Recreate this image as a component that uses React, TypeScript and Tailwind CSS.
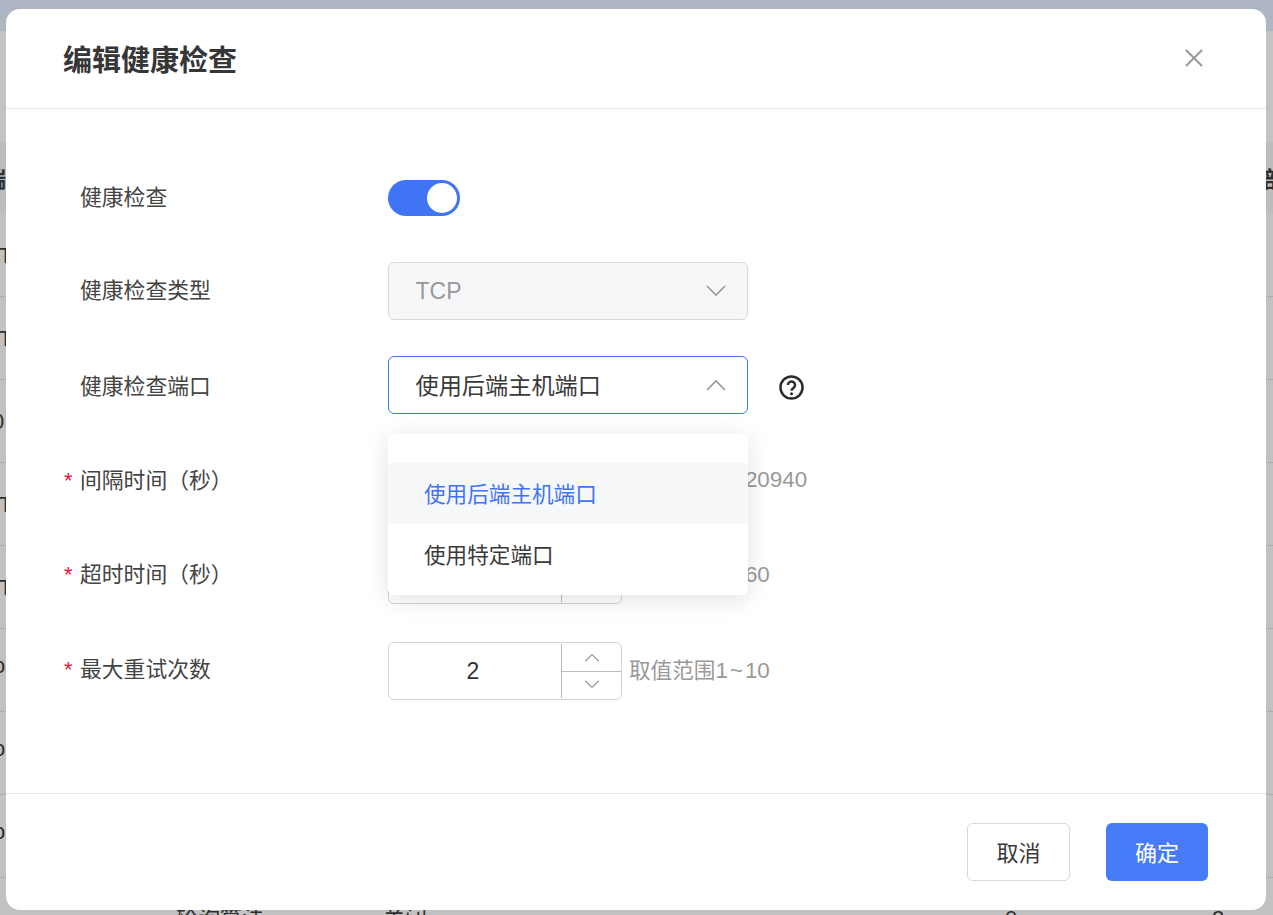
import { X } from 'lucide-react'

const font = { fontFamily: '"Liberation Sans", "Noto Sans CJK SC", sans-serif' }

const backRows = [
  { text: 'T', cls: 'ml-[-1px]' },
  { text: 'T', cls: 'ml-[-1px]' },
  { text: '0', cls: 'ml-[-8px]' },
  { text: 'T', cls: 'ml-[-1px]' },
  { text: 'T', cls: 'ml-[-1px]' },
  { text: 'o', cls: 'ml-[-7px] mb-[10px]' },
  { text: 'o', cls: 'ml-[-7px] mb-[10px]' },
  { text: 'o', cls: 'ml-[-7px] mb-[10px]' },
]

function Chevron({ up, className }: { up?: boolean; className: string }) {
  return (
    <svg viewBox="0 0 20 12" fill="none" className={className}>
      <path d={up ? 'M1 11 L10 2 L19 11' : 'M1 1 L10 10 L19 1'} stroke="#999999" strokeWidth="1.6" />
    </svg>
  )
}

function Label({ text, required, className = '' }: { text: string; required?: boolean; className?: string }) {
  return (
    <div className={`w-[324px] flex items-center text-[21.8px] text-[#444444] shrink-0 ${className}`}>
      <span className="w-[16px] text-[#e8173f] text-[22px] leading-none">{required ? '*' : ''}</span>
      <span>{text}</span>
    </div>
  )
}

function NumberInput({ value, max }: { value: string; max: string }) {
  return (
    <>
      <div className="w-[234px] h-[58px] border border-[#d4d4d4] rounded-[6px] flex items-stretch">
        <div className="w-[172px] flex items-center justify-center pr-[4px] text-[23px] text-[#333333]">{value}</div>
        <div className="flex-1 my-[1px] border-l border-[#bbbbbb] flex flex-col">
          <div className="flex-1 flex items-center justify-center border-b border-[#bbbbbb]">
            <Chevron up className="w-[16px] h-[9px]" />
          </div>
          <div className="flex-1 flex items-center justify-center">
            <Chevron className="w-[16px] h-[9px]" />
          </div>
        </div>
      </div>
      <span className="ml-[7px] text-[21.6px] text-[#999999]">
        取值范围<span className="text-[22.4px]">1<span className="px-[2px]">~</span>{max}</span>
      </span>
    </>
  )
}

export default function App() {
  return (
    <div className="relative h-[915px] overflow-hidden bg-[#c1c1c1] text-[#2f2f2f]" style={font}>
      {/* page behind the mask */}
      <div className="h-[31px] bg-[#aeb6c4]" />
      <div className="h-[111px] bg-[#c3c3c3]" />
      <div className="h-[72px] pt-[3px] bg-[#bcbcbc] flex items-center justify-between text-[22px] font-bold">
        <span className="ml-[-16px]">端</span>
        <span className="mr-[-12px]">部</span>
      </div>
      {backRows.map((row, i) => (
        <div key={i} className="h-[83px] border-b border-[#acacac] flex items-center text-[22px]">
          <span className={row.cls}>{row.text}</span>
        </div>
      ))}
      <div className="h-[83px] pb-[2px] flex items-center text-[22px]">
        <span className="ml-[176px] w-[207px]">轮询算法</span>
        <span className="w-[622px]">关闭</span>
        <span className="w-[207px]">0</span>
        <span>2</span>
      </div>

      {/* dialog */}
      <div className="absolute left-[6px] top-[9px] w-[1260px] h-[901px] bg-white rounded-[14px] flex flex-col">
        <div className="h-[100px] shrink-0 border-b border-[#e4e4ec] flex items-center justify-between pl-[58px] pr-[57px]">
          <h2 className="ml-[-1px] text-[29px] font-bold text-[#363636] pt-[7px]">编辑健康检查</h2>
          <X className="w-[30px] h-[30px] text-[#999999] mb-[2px]" strokeWidth={1.6} />
        </div>

        <div className="flex-1 pl-[58px] pt-[60px] relative">
          <div className="flex items-center h-[58px] mb-[35px]">
            <Label text="健康检查" />
            <div className="w-[72px] h-[36px] rounded-full bg-[#3f75f5] flex items-center justify-end pr-[3px]">
              <div className="w-[30px] h-[30px] rounded-full bg-white" />
            </div>
          </div>

          <div className="flex items-center h-[58px] mb-[36px]">
            <Label text="健康检查类型" />
            <div className="w-[360px] h-[58px] border border-[#d9d9d9] bg-[#f6f7f9] rounded-[6px] flex items-center justify-between pl-[26.5px] pr-[21px]">
              <span className="text-[23px] text-[#999999]">TCP</span>
              <Chevron className="w-[20px] h-[12px]" />
            </div>
          </div>

          <div className="flex items-center h-[58px] mb-[37px]">
            <Label text="健康检查端口" className="pt-[4px]" />
            <div className="w-[360px] h-[58px] border border-[#3f75f5] rounded-[6px] flex items-center justify-between pl-[26.5px] pr-[21px]">
              <span className="text-[23.2px] text-[#3a3a3a] pt-[2px]">使用后端主机端口</span>
              <Chevron up className="w-[20px] h-[12px]" />
            </div>
            <svg viewBox="0 0 24 24" fill="none" className="ml-[31px] w-[25px] h-[25px] mt-[5px]">
              <circle cx="12" cy="12" r="10.6" stroke="#2b2b2b" strokeWidth="2.4" />
              <path d="M8.6 9.6a3.4 3.4 0 1 1 5.3 2.8c-1.2.8-1.9 1.4-1.9 2.8" stroke="#2b2b2b" strokeWidth="2.4" />
              <circle cx="12" cy="18" r="1.5" fill="#2b2b2b" />
            </svg>
          </div>

          <div className="flex items-center h-[58px] mb-[37px]">
            <Label text="间隔时间（秒）" required className="pt-[2px]" />
            <NumberInput value="5" max="20940" />
          </div>

          <div className="flex items-center h-[58px] mb-[38px]">
            <Label text="超时时间（秒）" required />
            <NumberInput value="3" max="60" />
          </div>

          <div className="flex items-center h-[58px]">
            <Label text="最大重试次数" required className="pb-[2px]" />
            <NumberInput value="2" max="10" />
          </div>

          {/* open dropdown */}
          <div className="absolute left-[382px] top-[325px] w-[360px] h-[161px] bg-white rounded-[6px] shadow-[0_4px_24px_rgba(0,0,0,0.12)] pt-[29px]">
            <div className="h-[61px] bg-[#f6f7f9] flex items-center pl-[36px] pt-[3px] text-[21.6px] text-[#3f75f5]">使用后端主机端口</div>
            <div className="h-[61px] flex items-center pl-[36px] pt-[4px] text-[21.6px] text-[#3a3a3a]">使用特定端口</div>
          </div>
        </div>

        <div className="h-[117px] shrink-0 border-t border-[#e4e4ec] flex items-start justify-end gap-[36px] pt-[29px] pr-[58px]">
          <button className="w-[103px] h-[58px] pt-[2px] border border-[#d9d9d9] rounded-[6px] bg-white text-[22px] text-[#3a3a3a]">取消</button>
          <button className="w-[102px] h-[58px] pt-[2px] rounded-[6px] bg-[#477cf8] text-[22px] text-white">确定</button>
        </div>
      </div>
    </div>
  )
}
